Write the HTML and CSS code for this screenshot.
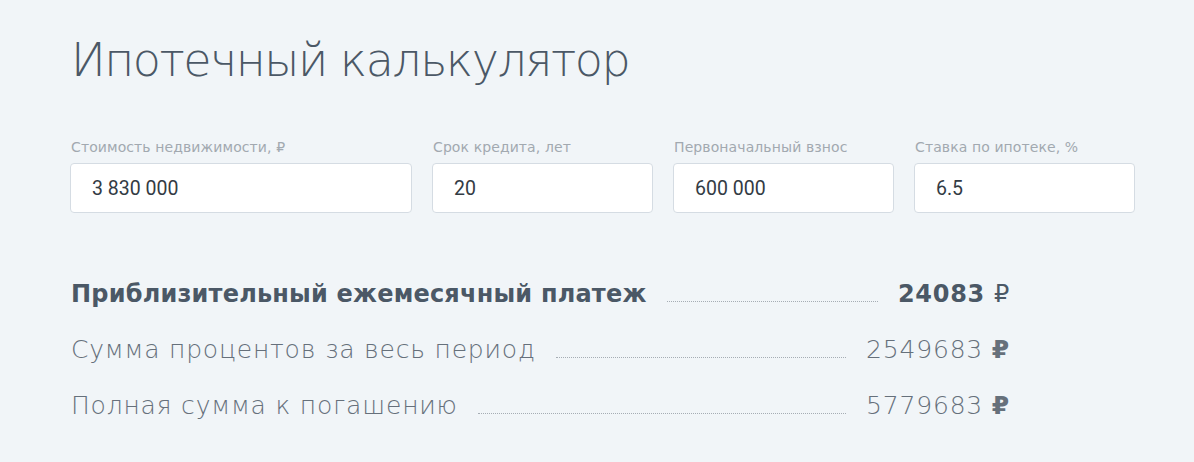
FILE: index.html
```html
<!DOCTYPE html>
<html lang="ru">

<head>
    <meta charset="UTF-8" />
    <meta name="viewport" content="width=device-width, initial-scale=1.0" />
    <title>Ипотечный калькулятор</title>
    <link rel="stylesheet" href="styles.css">
</head>

<body>
    <main class="calc">
        <h1 class="calc-title">Ипотечный калькулятор</h1>

        <div class="fields">
            <label class="field">
                <span class="field-label">Стоимость недвижимости, ₽</span>
                <input class="field-input" type="text" value="3 830 000">
            </label>
            <label class="field">
                <span class="field-label">Срок кредита, лет</span>
                <input class="field-input" type="text" value="20">
            </label>
            <label class="field">
                <span class="field-label">Первоначальный взнос</span>
                <input class="field-input" type="text" value="600 000">
            </label>
            <label class="field">
                <span class="field-label">Ставка по ипотеке, %</span>
                <input class="field-input" type="text" value="6.5">
            </label>
        </div>

        <div class="results">
            <div class="row row-main">
                <span class="row-label">Приблизительный ежемесячный платеж</span>
                <span class="row-dots"></span>
                <span class="row-value">24083 <span class="rub">₽</span></span>
            </div>
            <div class="row">
                <span class="row-label">Сумма процентов за весь период</span>
                <span class="row-dots"></span>
                <span class="row-value">2549683 <span class="rub">₽</span></span>
            </div>
            <div class="row">
                <span class="row-label">Полная сумма к погашению</span>
                <span class="row-dots"></span>
                <span class="row-value">5779683 <span class="rub">₽</span></span>
            </div>
        </div>
    </main>
</body>

</html>
```

FILE: styles.css
```css
* {
    box-sizing: border-box;
    margin: 0;
    padding: 0;
}

body {
    background: #f1f5f8;
    font-family: "DejaVu Sans", "Open Sans", sans-serif;
    color: #4b5866;
}

.calc {
    padding: 32px 59px 0 70px;
}

.calc-title {
    font-size: 46px;
    font-weight: 200;
    line-height: 56px;
    letter-spacing: -1.5px;
    color: #4b5866;
    padding-left: 1px;
}

.fields {
    display: grid;
    grid-template-columns: 342px 221px 221px 221px;
    column-gap: 20px;
    margin-top: 50px;
}

.field {
    display: flex;
    flex-direction: column;
}

.field-label {
    font-size: 14px;
    line-height: 18px;
    letter-spacing: 0.1px;
    color: #a2a9b0;
    padding-left: 1px;
    margin-bottom: 7px;
}

.field-input {
    height: 50px;
    border: 1px solid #d5dce3;
    border-radius: 4px;
    background: #fff;
    padding: 0 21px;
    font-family: Roboto, "Liberation Sans", sans-serif;
    font-size: 19.5px;
    color: #333b44;
    outline: none;
}

.results {
    width: 940px;
    margin-top: 65px;
}

.row {
    display: flex;
    align-items: baseline;
    font-size: 25px;
    font-weight: 200;
    line-height: 32px;
    color: #66707b;
    margin-bottom: 24px;
}

.row-main {
    font-size: 24px;
    font-weight: 700;
    color: #4b5866;
}

.row-label {
    padding-left: 1px;
    letter-spacing: 0.8px;
}

.row-main .row-label {
    letter-spacing: 0.2px;
}

.row-dots {
    flex: 1;
    margin: 0 20px;
    border-bottom: 1px dotted #a6adb4;
}

.row-value {
    white-space: nowrap;
    letter-spacing: 0.8px;
}

.row-main .row-value {
    letter-spacing: 0.7px;
}

.row .rub {
    font-weight: 700;
}

.row-main .rub {
    font-weight: 400;
}
```
